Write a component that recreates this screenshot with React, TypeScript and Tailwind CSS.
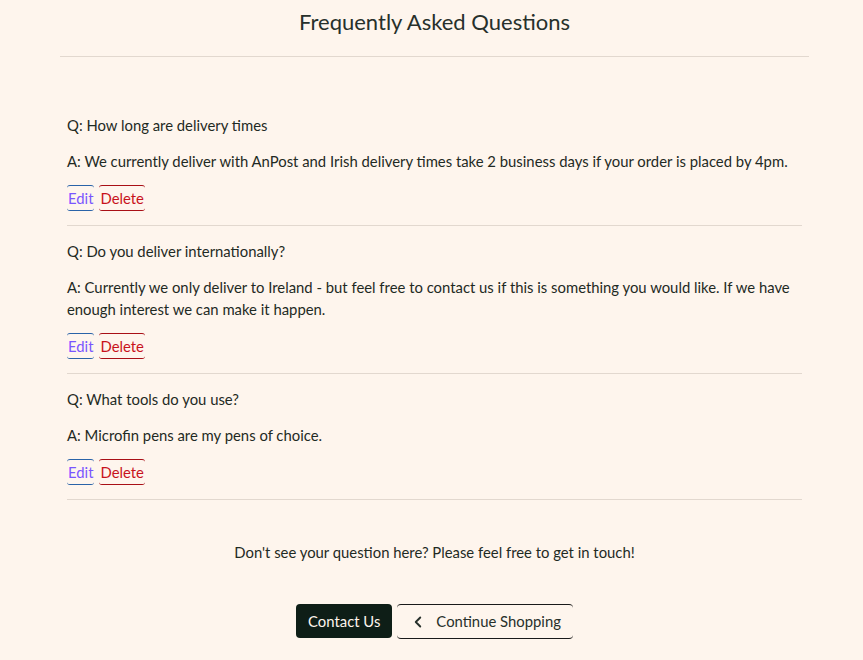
import { ChevronLeft } from "lucide-react";

const faqs = [
  {
    q: "How long are delivery times",
    a: "We currently deliver with AnPost and Irish delivery times take 2 business days if your order is placed by 4pm.",
  },
  {
    q: "Do you deliver internationally?",
    a: "Currently we only deliver to Ireland - but feel free to contact us if this is something you would like. If we have enough interest we can make it happen.",
  },
  {
    q: "What tools do you use?",
    a: "Microfin pens are my pens of choice.",
  },
];

export default function App() {
  return (
    <div
      className="min-h-[660px] w-full bg-[#fef5ed] text-[#1f2a24]"
      style={{ fontFamily: "Lato, 'Noto Sans', sans-serif" }}
    >
      <div className="ml-[60px] w-[749px]">
        <h1 className="pt-[7px] text-center text-[22px] leading-[30px] text-[#27302b]">
          Frequently Asked Questions
        </h1>
        <hr className="mt-[19px] border-0 border-t border-[#e2d8cf]" />

        <div className="mt-[57px] px-[7px]">
          {faqs.map((f) => (
            <div key={f.q} className="mb-[14px] border-b border-[#e2d8cf] pb-[14px] text-[14.85px] leading-[22px]">
              <p>Q: {f.q}</p>
              <p className="mt-[14px]">A: {f.a}</p>
              <div className="mt-[13px] flex gap-[5px]">
                <a className="rounded-[3px] border-y border-[#2a63a8] px-px py-px text-[#7a55ff]">Edit</a>
                <a className="rounded-[3px] border-y border-[#a80f16] px-px py-px text-[#c8121b]">Delete</a>
              </div>
            </div>
          ))}
        </div>

        <p className="mt-[41px] text-center text-[14.85px] leading-[22px]">
          Don't see your question here? Please feel free to get in touch!
        </p>

        <div className="mt-[41px] flex justify-center gap-[5px]">
          <button className="h-[34px] rounded-[4px] bg-[#0e1e17] px-[12px] text-[14.85px] text-[#fef5ed]">
            Contact Us
          </button>
          <button className="flex h-[35px] items-center gap-[9px] rounded-[4px] border-y border-[#1a1a1a] px-[12px] text-[14.85px] text-[#27302b]">
            <ChevronLeft size={18} strokeWidth={2.5} />
            Continue Shopping
          </button>
        </div>
      </div>
    </div>
  );
}
